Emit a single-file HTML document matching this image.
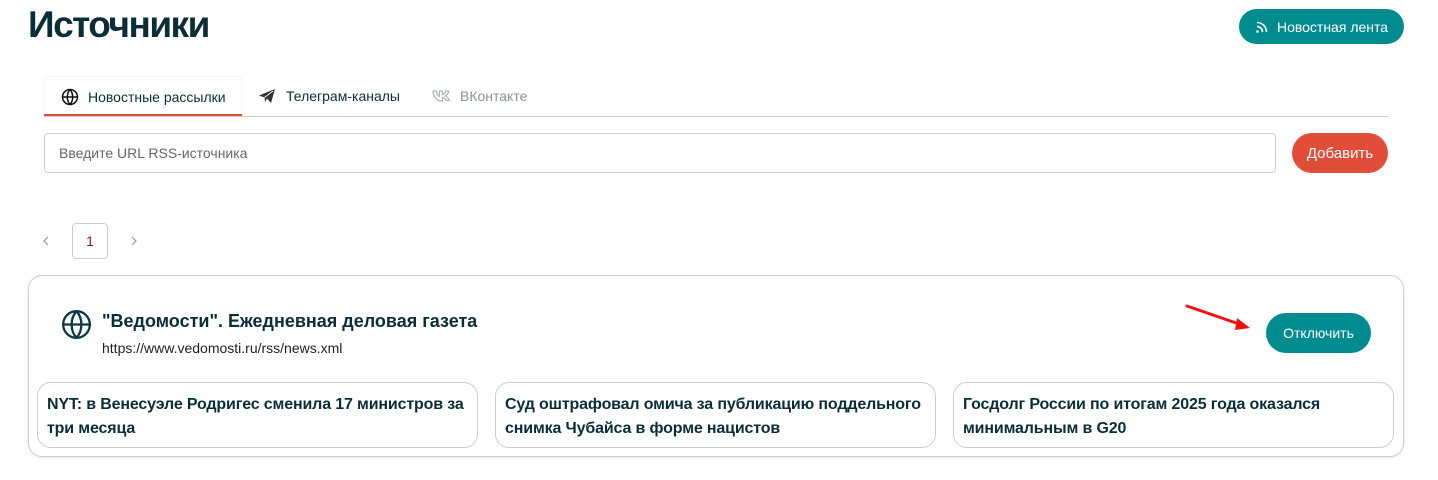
<!DOCTYPE html>
<html><head><meta charset="utf-8">
<style>
*{box-sizing:border-box;margin:0;padding:0}
body{width:1438px;height:480px;background:#fff;font-family:"Liberation Sans",Arial,sans-serif;position:relative;overflow:hidden;color:#0c2f3a}
.a{position:absolute}
h1{position:absolute;left:28px;top:4px;font-size:37px;font-weight:bold;color:#0b2d38;letter-spacing:-1.5px}
.btn{position:absolute;border-radius:20px;color:#fff;font-size:14px;display:flex;align-items:center;justify-content:center}
.tab{position:absolute;top:76px;height:40px;display:flex;align-items:center;font-size:14px}
.news{position:absolute;top:382px;height:66px;border:1px solid #ccc;border-radius:14px;padding:10px 2px 10px 9px;font-size:16px;font-weight:bold;line-height:24px;color:#0b2d38;background:#fff;letter-spacing:-0.15px}
</style></head><body>
<h1>Источники</h1>
<div class="btn" style="left:1239px;top:9px;width:165px;height:35px;background:#008b8f;gap:8px">
<svg width="14" height="14" viewBox="0 0 14 14" fill="none" stroke="#fff" stroke-width="1.6"><circle cx="2.5" cy="11.5" r="1.3" fill="#fff" stroke="none"/><path d="M2 6.5a5.5 5.5 0 0 1 5.5 5.5"/><path d="M2 2.5a9.5 9.5 0 0 1 9.5 9.5"/></svg>
<span>Новостная лента</span></div>

<div class="a" style="left:44px;top:116px;width:1344px;height:1px;background:#ccc"></div>
<div class="tab" style="left:44px;width:198px;border:1px solid #f3f3f3;border-bottom:none;border-radius:3px 3px 0 0;padding-left:16px;color:#0b2d38">
<svg width="18" height="18" viewBox="0 0 20 20" fill="none" stroke="#111" stroke-width="1.7"><circle cx="10" cy="10" r="8.3"/><path d="M1.7 10h16.6M10 1.7c-4 4.5-4 12.1 0 16.6M10 1.7c4 4.5 4 12.1 0 16.6"/></svg>
<span style="margin-left:9px">Новостные рассылки</span></div>
<div class="a" style="left:44px;top:114px;width:198px;height:2px;background:#e04e3a"></div>
<div class="tab" style="left:258px;color:#0b2d38">
<svg width="18" height="16" viewBox="0 0 18 16"><path d="M1 7.5L17 1 13 15 9 10.5 7 14 6.5 9.5z" fill="#333"/><path d="M6.5 9.5L15 3" stroke="#fff" stroke-width="0.8"/></svg>
<span style="margin-left:10px">Телеграм-каналы</span></div>
<div class="tab" style="left:432px;color:#8a9498">
<svg width="20" height="14" viewBox="0 0 20 14" fill="none" stroke="#aab2b5" stroke-width="1.2"><path d="M1 2h3.5c.3 3 1.5 5 3 5.5V2h3v3.5c1.5-.2 2.8-2 3.3-3.5h3c-.4 2-2 4-3.5 5 1.5.6 3.3 2.4 4 4.5h-3.3c-.6-1.6-2-3-3.5-3.2V12h-1C5 12 1.5 8 1 2z"/></svg>
<span style="margin-left:8px">ВКонтакте</span></div>

<div class="a" style="left:44px;top:133px;width:1232px;height:40px;border:1px solid #ccc;border-radius:4px;padding-left:14px;font-size:14px;color:#666;line-height:38px">Введите URL RSS-источника</div>
<div class="btn" style="left:1292px;top:133px;width:96px;height:40px;background:#e04e3a;font-size:15px">Добавить</div>

<svg class="a" style="left:41px;top:236px" width="10" height="10" viewBox="0 0 10 10" fill="none" stroke="#999" stroke-width="1.2"><path d="M7 1L3 5l4 4"/></svg>
<div class="a" style="left:72px;top:223px;width:36px;height:36px;border:1px solid #ccc;border-radius:4px;text-align:center;line-height:34px;font-size:14px;color:#8b1a1a">1</div>
<svg class="a" style="left:129px;top:236px" width="10" height="10" viewBox="0 0 10 10" fill="none" stroke="#999" stroke-width="1.2"><path d="M3 1l4 4-4 4"/></svg>

<div class="a" style="left:28px;top:275px;width:1376px;height:182px;border:1px solid #ccc;border-radius:14px;box-shadow:0 1px 3px rgba(0,0,0,.08)"></div>
<svg class="a" style="left:61px;top:309px" width="31" height="31" viewBox="0 0 20 20" fill="none" stroke="#0b3a44" stroke-width="1.5"><circle cx="10" cy="10" r="8.6"/><path d="M1.4 10h17.2M10 1.4c-4.2 4.7-4.2 12.5 0 17.2M10 1.4c4.2 4.7 4.2 12.5 0 17.2"/></svg>
<div class="a" style="left:102px;top:311px;font-size:18px;font-weight:bold;color:#0b2d38">"Ведомости". Ежедневная деловая газета</div>
<div class="a" style="left:102px;top:340px;font-size:14px;color:#222">https://www.vedomosti.ru/rss/news.xml</div>
<div class="btn" style="left:1266px;top:313px;width:105px;height:40px;background:#008b8f">Отключить</div>
<svg class="a" style="left:1184px;top:303px" width="70" height="30" viewBox="0 0 70 30"><path d="M3 3L58 22" stroke="#f01010" stroke-width="3" stroke-linecap="round"/><path d="M66 25L53 15 51 27z" fill="#f01010"/></svg>

<div class="news" style="left:37px;width:441px">NYT: в Венесуэле Родригес сменила 17 министров за три месяца</div>
<div class="news" style="left:495px;width:441px">Суд оштрафовал омича за публикацию поддельного снимка Чубайса в форме нацистов</div>
<div class="news" style="left:953px;width:441px">Госдолг России по итогам 2025 года оказался минимальным в G20</div>
</body></html>
